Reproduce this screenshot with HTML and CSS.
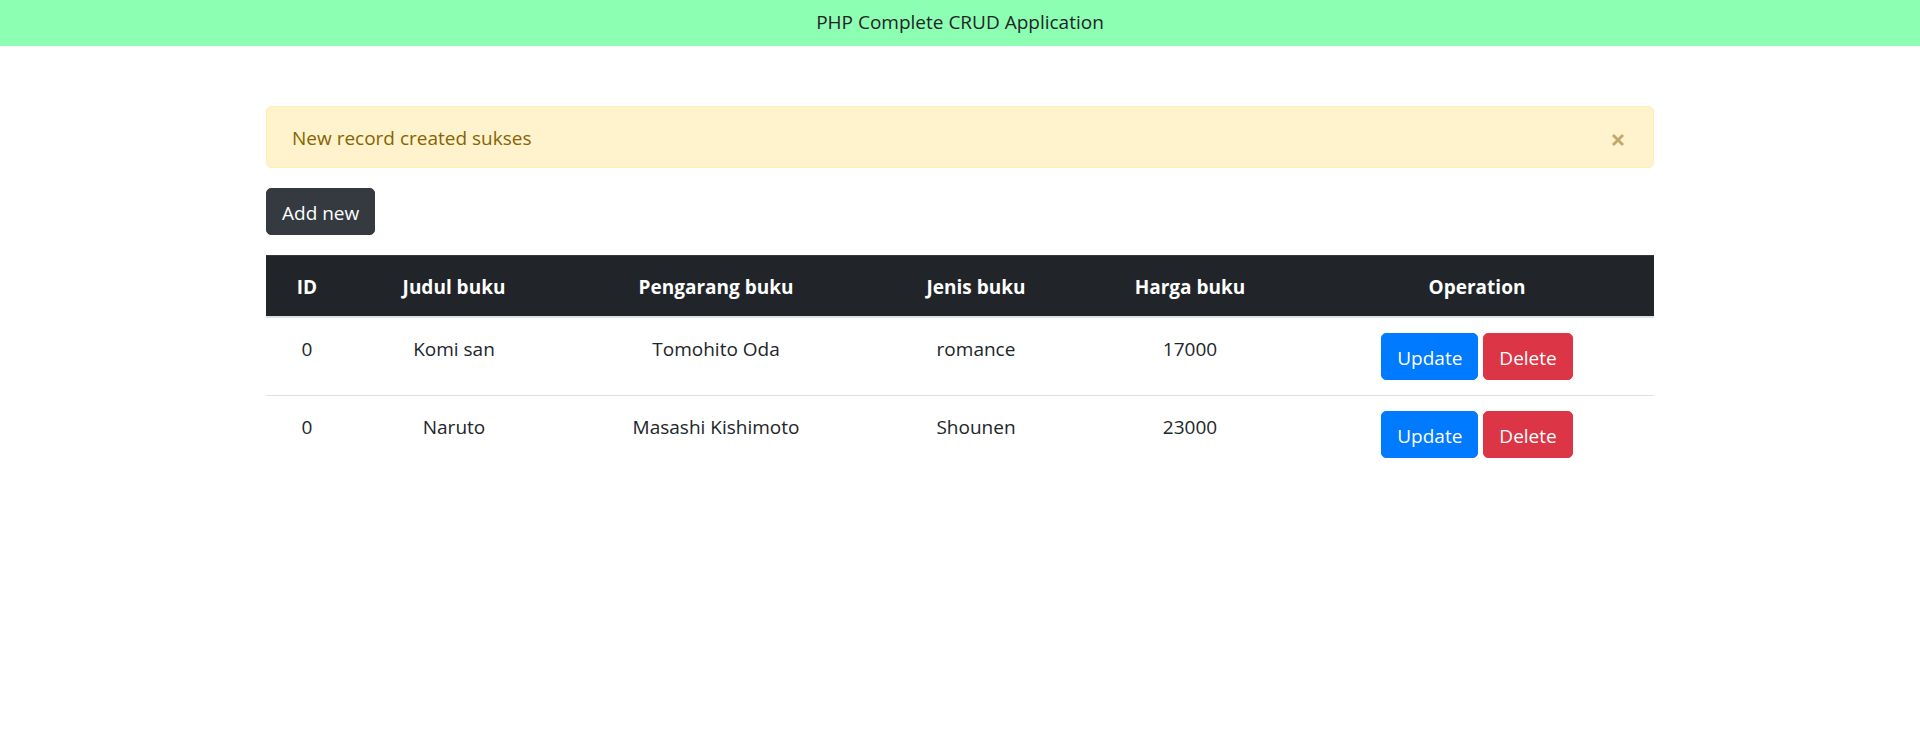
FILE: index.html
```html
<!DOCTYPE html>
<html lang="en">
<head>
<meta charset="utf-8">
<title>PHP Complete CRUD Application</title>
<link rel="stylesheet" href="styles.css">
</head>
<body>
<nav class="navbar">PHP Complete CRUD Application</nav>
<main class="container">
  <div class="alert">
    <span class="alert-text">New record created sukses</span>
    <button class="alert-close" type="button" aria-label="Close">
      <svg width="14" height="14" viewBox="0 0 14 14" aria-hidden="true"><path d="M2 2 L12 12 M12 2 L2 12" stroke="currentColor" stroke-width="2.8" stroke-linecap="butt" fill="none"/></svg>
    </button>
  </div>
  <div class="toolbar">
    <a class="btn btn-dark" href="#">Add new</a>
  </div>
  <table class="table">
    <colgroup>
      <col class="c-id"><col class="c-judul"><col class="c-peng"><col class="c-jenis"><col class="c-harga"><col class="c-op">
    </colgroup>
    <thead>
      <tr><th>ID</th><th>Judul buku</th><th>Pengarang buku</th><th>Jenis buku</th><th>Harga buku</th><th>Operation</th></tr>
    </thead>
    <tbody>
      <tr>
        <td>0</td><td>Komi san</td><td>Tomohito Oda</td><td>romance</td><td>17000</td>
        <td><div class="ops"><a class="btn btn-primary" href="#">Update</a><a class="btn btn-danger" href="#">Delete</a></div></td>
      </tr>
      <tr>
        <td>0</td><td>Naruto</td><td>Masashi Kishimoto</td><td>Shounen</td><td>23000</td>
        <td><div class="ops"><a class="btn btn-primary" href="#">Update</a><a class="btn btn-danger" href="#">Delete</a></div></td>
      </tr>
    </tbody>
  </table>
</main>
</body>
</html>
```
FILE: styles.css
```css
* { box-sizing: border-box; }
html, body { margin: 0; padding: 0; }
body {
  font-family: "Open Sans", "Noto Sans", "Liberation Sans", sans-serif;
  font-size: 19px;
  line-height: 30px;
  color: #212529;
  background: #fff;
}
.navbar {
  background: #8cffb2;
  height: 46px;
  padding: 7px 20px 9px;
  text-align: center;
  color: #212529;
}
.container {
  width: 1388px;
  margin: 60px auto 0;
}
.alert {
  display: flex;
  align-items: flex-start;
  justify-content: space-between;
  padding: 16px 25px 14px 25px;
  background: #fff3cd;
  border: 1px solid #ffeeba;
  border-radius: 5px;
  color: #856404;
  margin-bottom: 20px;
}
.alert-text { flex: 1; }
.alert-close {
  border: 0;
  background: transparent;
  padding: 0;
  margin: 10px 3px 0 0;
  color: inherit;
  opacity: .5;
  width: 14px;
  height: 14px;
  display: block;
  cursor: pointer;
}
.alert-close svg { display: block; }
.toolbar { margin-bottom: 20px; display: flex; }
.btn {
  display: inline-block;
  padding: 8.5px 15px 6.5px;
  border: 1px solid transparent;
  border-radius: 5px;
  color: #fff;
  text-decoration: none;
  font-size: 19px;
  line-height: 30px;
}
.btn-dark { background: #343a40; border-color: #343a40; }
.btn-primary { background: #007bff; border-color: #007bff; }
.btn-danger { background: #dc3545; border-color: #dc3545; }
.table {
  width: 1388px;
  border-collapse: collapse;
  table-layout: fixed;
}
.c-id { width: 82px; }
.c-judul { width: 212px; }
.c-peng { width: 312px; }
.c-jenis { width: 208px; }
.c-harga { width: 220px; }
.c-op { width: 354px; }
.table th, .table td {
  padding: 16px 15px 14px;
  text-align: center;
  vertical-align: top;
  border-top: 1px solid #dee2e6;
}
.table td:last-child { padding-top: 15px; padding-bottom: 15px; }
.table thead th {
  background: #212529;
  color: #fff;
  font-weight: 700;
  border-top-color: #32383e;
  border-bottom: 2.5px solid #dee2e6;
}
.table tbody tr:first-child td { border-top: 0; }
.ops {
  display: flex;
  justify-content: center;
  gap: 5px;
}
```
